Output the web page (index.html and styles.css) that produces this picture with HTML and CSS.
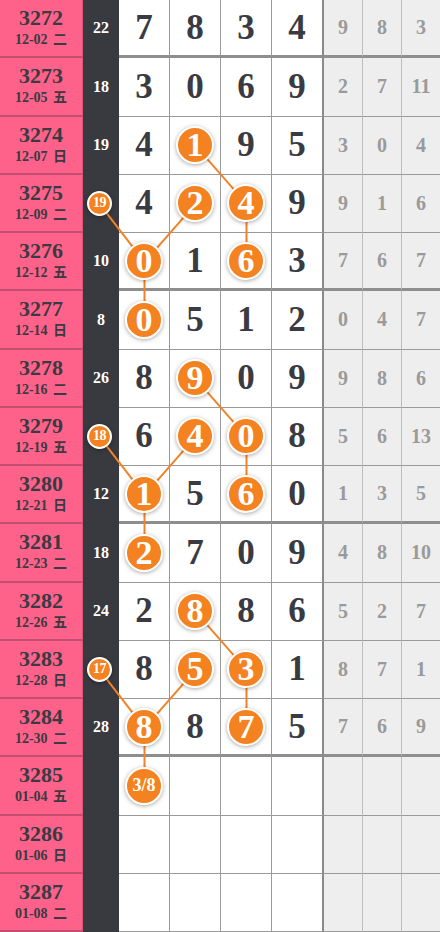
FILE: index.html
```html
<!DOCTYPE html>
<html lang="zh">
<head>
  <meta charset="UTF-8" />
  <meta name="viewport" content="width=device-width, initial-scale=1" />
  <title>走势图</title>
  <link rel="stylesheet" href="styles.css">
</head>
<body>

  <div class="board">

    <!-- connecting lines -->
    <svg class="links" viewBox="0 0 440 932" preserveAspectRatio="none">
      <g stroke="#f28227" stroke-width="2" fill="none">
        <line x1="195.5" y1="145.6" x2="246.5" y2="203.9" />
        <line x1="195.5" y1="203.9" x2="144.5" y2="262.1" />
        <line x1="99.5" y1="203.9" x2="144.5" y2="262.1" />
        <line x1="246.5" y1="203.9" x2="246.5" y2="262.1" />
        <line x1="144.5" y1="262.1" x2="144.5" y2="320.4" />

        <line x1="195.5" y1="378.6" x2="246.5" y2="436.9" />
        <line x1="195.5" y1="436.9" x2="144.5" y2="495.1" />
        <line x1="99.5" y1="436.9" x2="144.5" y2="495.1" />
        <line x1="246.5" y1="436.9" x2="246.5" y2="495.1" />
        <line x1="144.5" y1="495.1" x2="144.5" y2="553.4" />

        <line x1="195.5" y1="611.6" x2="246.5" y2="669.9" />
        <line x1="195.5" y1="669.9" x2="144.5" y2="728.1" />
        <line x1="99.5" y1="669.9" x2="144.5" y2="728.1" />
        <line x1="246.5" y1="669.9" x2="246.5" y2="728.1" />
        <line x1="144.5" y1="728.1" x2="144.5" y2="786.4" />
      </g>
    </svg>

    <div class="row sep">
      <div class="issue"><b>3272</b><small>12-02 二</small></div>
      <div class="sum">22</div>
      <div class="d">7</div><div class="d">8</div><div class="d">3</div><div class="d">4</div>
      <div class="g">9</div><div class="g">8</div><div class="g">3</div>
    </div>
    <div class="row">
      <div class="issue"><b>3273</b><small>12-05 五</small></div>
      <div class="sum">18</div>
      <div class="d">3</div><div class="d">0</div><div class="d">6</div><div class="d">9</div>
      <div class="g">2</div><div class="g">7</div><div class="g">11</div>
    </div>
    <div class="row">
      <div class="issue"><b>3274</b><small>12-07 日</small></div>
      <div class="sum">19</div>
      <div class="d">4</div><div class="d"><span class="ball">1</span></div><div class="d">9</div><div class="d">5</div>
      <div class="g">3</div><div class="g">0</div><div class="g">4</div>
    </div>
    <div class="row">
      <div class="issue"><b>3275</b><small>12-09 二</small></div>
      <div class="sum"><span class="ball sm">19</span></div>
      <div class="d">4</div><div class="d"><span class="ball">2</span></div><div class="d"><span class="ball">4</span></div><div class="d">9</div>
      <div class="g">9</div><div class="g">1</div><div class="g">6</div>
    </div>
    <div class="row sep">
      <div class="issue"><b>3276</b><small>12-12 五</small></div>
      <div class="sum">10</div>
      <div class="d"><span class="ball">0</span></div><div class="d">1</div><div class="d"><span class="ball">6</span></div><div class="d">3</div>
      <div class="g">7</div><div class="g">6</div><div class="g">7</div>
    </div>
    <div class="row">
      <div class="issue"><b>3277</b><small>12-14 日</small></div>
      <div class="sum">8</div>
      <div class="d"><span class="ball">0</span></div><div class="d">5</div><div class="d">1</div><div class="d">2</div>
      <div class="g">0</div><div class="g">4</div><div class="g">7</div>
    </div>
    <div class="row">
      <div class="issue"><b>3278</b><small>12-16 二</small></div>
      <div class="sum">26</div>
      <div class="d">8</div><div class="d"><span class="ball">9</span></div><div class="d">0</div><div class="d">9</div>
      <div class="g">9</div><div class="g">8</div><div class="g">6</div>
    </div>
    <div class="row">
      <div class="issue"><b>3279</b><small>12-19 五</small></div>
      <div class="sum"><span class="ball sm">18</span></div>
      <div class="d">6</div><div class="d"><span class="ball">4</span></div><div class="d"><span class="ball">0</span></div><div class="d">8</div>
      <div class="g">5</div><div class="g">6</div><div class="g">13</div>
    </div>
    <div class="row sep">
      <div class="issue"><b>3280</b><small>12-21 日</small></div>
      <div class="sum">12</div>
      <div class="d"><span class="ball">1</span></div><div class="d">5</div><div class="d"><span class="ball">6</span></div><div class="d">0</div>
      <div class="g">1</div><div class="g">3</div><div class="g">5</div>
    </div>
    <div class="row">
      <div class="issue"><b>3281</b><small>12-23 二</small></div>
      <div class="sum">18</div>
      <div class="d"><span class="ball">2</span></div><div class="d">7</div><div class="d">0</div><div class="d">9</div>
      <div class="g">4</div><div class="g">8</div><div class="g">10</div>
    </div>
    <div class="row">
      <div class="issue"><b>3282</b><small>12-26 五</small></div>
      <div class="sum">24</div>
      <div class="d">2</div><div class="d"><span class="ball">8</span></div><div class="d">8</div><div class="d">6</div>
      <div class="g">5</div><div class="g">2</div><div class="g">7</div>
    </div>
    <div class="row">
      <div class="issue"><b>3283</b><small>12-28 日</small></div>
      <div class="sum"><span class="ball sm">17</span></div>
      <div class="d">8</div><div class="d"><span class="ball">5</span></div><div class="d"><span class="ball">3</span></div><div class="d">1</div>
      <div class="g">8</div><div class="g">7</div><div class="g">1</div>
    </div>
    <div class="row sep">
      <div class="issue"><b>3284</b><small>12-30 二</small></div>
      <div class="sum">28</div>
      <div class="d"><span class="ball">8</span></div><div class="d">8</div><div class="d"><span class="ball">7</span></div><div class="d">5</div>
      <div class="g">7</div><div class="g">6</div><div class="g">9</div>
    </div>
    <div class="row">
      <div class="issue"><b>3285</b><small>01-04 五</small></div>
      <div class="sum"></div>
      <div class="d"><span class="ball guess">3/8</span></div><div class="d"></div><div class="d"></div><div class="d"></div>
      <div class="g"></div><div class="g"></div><div class="g"></div>
    </div>
    <div class="row">
      <div class="issue"><b>3286</b><small>01-06 日</small></div>
      <div class="sum"></div>
      <div class="d"></div><div class="d"></div><div class="d"></div><div class="d"></div>
      <div class="g"></div><div class="g"></div><div class="g"></div>
    </div>
    <div class="row">
      <div class="issue"><b>3287</b><small>01-08 二</small></div>
      <div class="sum"></div>
      <div class="d"></div><div class="d"></div><div class="d"></div><div class="d"></div>
      <div class="g"></div><div class="g"></div><div class="g"></div>
    </div>

  </div>

</body>
</html>
```

FILE: styles.css
```css
* {
  box-sizing: border-box;
}

body {
  margin: 0;
  overflow: hidden;
  background: #fff;
  font-family: 'Liberation Serif', 'Noto Sans CJK SC', serif;
  font-weight: bold;
}

.board {
  position: relative;
  width: 440px;
  height: 932px;
  display: grid;
  grid-template-rows: repeat(16, 1fr);
}

.links {
  position: absolute;
  top: 0; left: 0;
  width: 100%;
  height: 100%;
  z-index: 1;
  pointer-events: none;
}

.row {
  display: grid;
  grid-template-columns: 83px 36px 51px 51px 51px 52px 39px 39px 38px;
}

.row > div {
  display: flex;
  align-items: center;
  justify-content: center;
  border-bottom: 1px solid #9a9a9a;
}

.row.sep > div {
  border-bottom: 3px solid #8e8e8e;
}

/* issue / date */
.issue {
  flex-direction: column;
  background: #fe628a;
  color: #3a3a42;
  border-right: 1px solid #d9557a;
}

.row > .issue,
.row.sep > .issue {
  border-bottom: 2px solid #c24f6f;
}

.issue b {
  font-size: 22px;
  line-height: 22px;
}

.issue small {
  font-size: 14px;
  line-height: 18px;
  margin-top: 2px;
  word-spacing: 2px;
}

/* sum column */
.sum {
  background: #393940;
  color: #fff;
  font-size: 16px;
}

.row > .sum,
.row.sep > .sum {
  border-bottom-color: #393940;
}

/* main digits */
.d {
  color: #3a3a42;
  font-size: 35px;
  border-right: 1px solid #9a9a9a;
}

.d:nth-child(6) {
  border-right: 2px solid #8a8a8a;
}

/* span columns */
.g {
  background: #eeeeee;
  color: #9a9a9a;
  font-size: 20px;
  border-right: 1px solid #bdbdbd;
}

.g:last-child {
  border-right: none;
}

/* balls */
.ball {
  position: relative;
  z-index: 2;
  width: 38px;
  height: 38px;
  border-radius: 50%;
  border: 2px solid #fff;
  background: #f58220;
  color: #fff;
  font-size: 34px;
  display: flex;
  align-items: center;
  justify-content: center;
  box-shadow: 0 1px 4px rgba(0, 0, 0, 0.35);
}

.ball.sm {
  width: 25px;
  height: 25px;
  font-size: 14px;
  letter-spacing: -0.5px;
  margin-right: 3px;
}

.ball.guess {
  font-size: 18px;
}
```
